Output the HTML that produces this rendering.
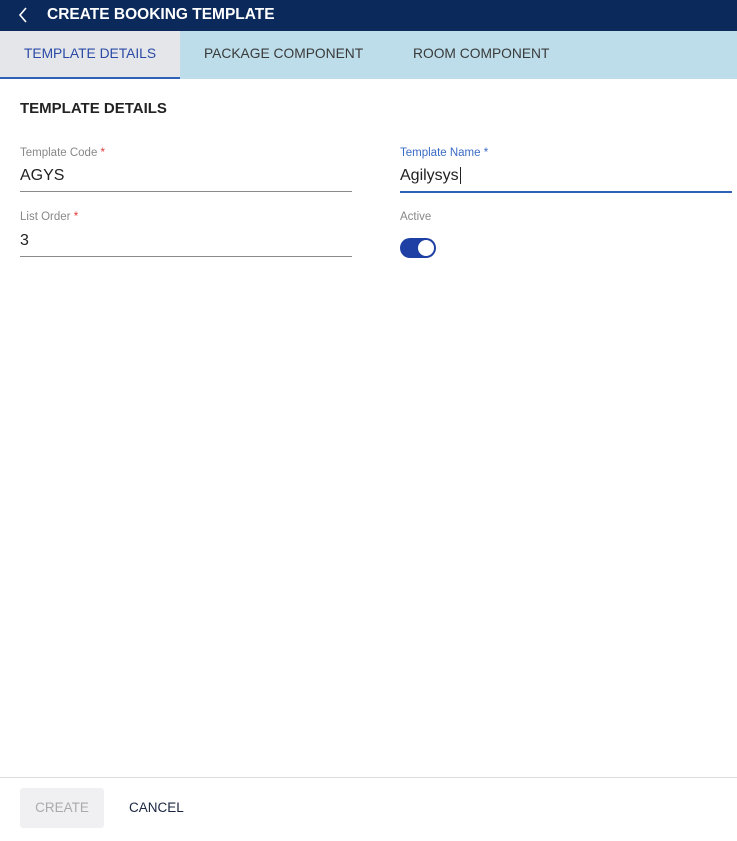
<!DOCTYPE html>
<html><head><meta charset="utf-8"><style>
*{box-sizing:border-box;margin:0;padding:0}
body{width:737px;height:841px;background:#fff;font-family:"Liberation Sans",sans-serif;position:relative;overflow:hidden}
.hdr{position:absolute;left:0;top:0;width:737px;height:31px;background:#0b2a5b;color:#fff;font-size:15.5px;font-weight:bold}
.hdr span{position:absolute;left:47px;top:6px}
.tabs{position:absolute;left:0;top:31px;width:737px;height:48px;background:#bcdde9}
.tab{position:absolute;top:0;height:48px;line-height:46px;font-size:13.8px;color:#3a3a3a}
.t1{left:0;width:180px;background:#e5e6ea;color:#2a4aa5;text-align:center;border-bottom:2px solid #2e62b8}
.h{position:absolute;left:20px;top:100px;font-size:15px;font-weight:bold;color:#222}
.lbl{position:absolute;font-size:11.5px;color:#888}
.lbl b{color:#e03a3a;font-weight:normal}
.val{position:absolute;font-size:16px;color:#222}
.line{position:absolute;height:1px;background:#8a8a8a}
</style></head><body>
<div class="hdr"><svg style="position:absolute;left:18px;top:7px" width="10" height="16"><path d="M8 1L2 8l6 7" stroke="#fff" stroke-width="1.6" fill="none"/></svg><span>CREATE BOOKING TEMPLATE</span></div>
<div class="tabs">
<div class="tab t1">TEMPLATE DETAILS</div>
<div class="tab" style="left:204px">PACKAGE COMPONENT</div>
<div class="tab" style="left:413px">ROOM COMPONENT</div>
</div>
<div class="h">TEMPLATE DETAILS</div>
<div class="lbl" style="left:20px;top:147px">Template Code <b>*</b></div>
<div class="val" style="left:20px;top:167px">AGYS</div>
<div class="line" style="left:20px;top:191px;width:332px"></div>
<div class="lbl" style="left:400px;top:147px;color:#3a6bc4">Template Name <b style="color:#3a6bc4">*</b></div>
<div class="val" style="left:400px;top:167px">Agilysys<span style="border-left:1px solid #222;margin-left:1px"></span></div>
<div class="line" style="left:400px;top:191px;width:332px;height:2px;background:#2e62b8"></div>
<div class="lbl" style="left:20px;top:211px">List Order <b>*</b></div>
<div class="val" style="left:20px;top:232px">3</div>
<div class="line" style="left:20px;top:256px;width:332px"></div>
<div class="lbl" style="left:400px;top:211px">Active</div>
<div style="position:absolute;left:400px;top:238px;width:36px;height:20px;border-radius:10px;background:#1e3fa3"><div style="position:absolute;right:2px;top:2px;width:16px;height:16px;border-radius:50%;background:#fff"></div></div>
<div style="position:absolute;left:0;top:777px;width:737px;height:1px;background:#ddd"></div>
<div style="position:absolute;left:20px;top:788px;width:84px;height:40px;background:#f0f0f2;border-radius:3px;color:#aaa;font-size:13.5px;text-align:center;line-height:40px">CREATE</div>
<div style="position:absolute;left:129px;top:788px;height:40px;line-height:40px;font-size:13.5px;color:#1a2540">CANCEL</div>
</body></html>
